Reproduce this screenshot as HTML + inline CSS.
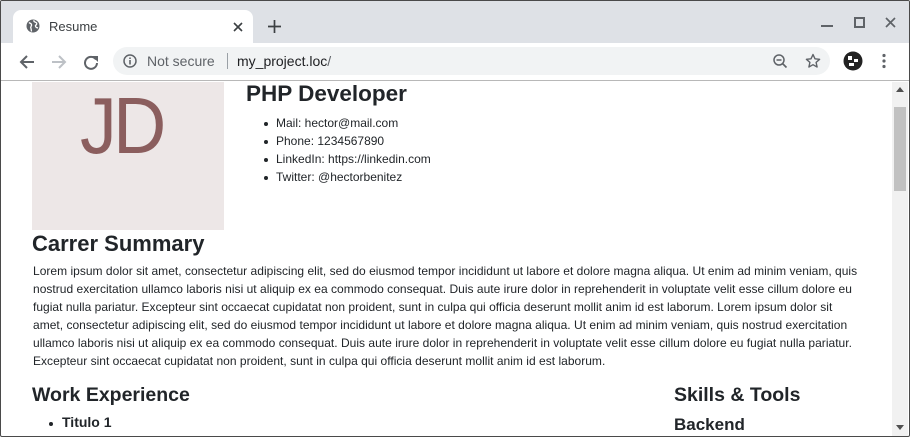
<!DOCTYPE html>
<html><head><meta charset="utf-8"><style>
*{margin:0;padding:0;box-sizing:border-box}
body{width:910px;height:437px;overflow:hidden;font-family:"Liberation Sans",sans-serif;background:#fff;position:relative;color:#212529}
.win{position:absolute;left:0;top:0;width:910px;height:437px;border:1px solid #4a4a4a;border-radius:2px;overflow:hidden}
.title{position:absolute;left:0;top:0;width:908px;height:42px;background:#dee1e6}
.tab{position:absolute;left:12px;top:9px;width:240px;height:34px;background:#fff;border-radius:8px 8px 0 0}
.tab .t{position:absolute;left:36px;top:9px;font-size:13px;color:#3c4043}
.tool{position:absolute;left:0;top:42px;width:908px;height:38px;background:#fff;border-bottom:1px solid #b8b8b8}
.omni{position:absolute;left:112px;top:4px;width:717px;height:28px;background:#f1f3f4;border-radius:14px}
.omni .ns{position:absolute;left:34px;top:6px;font-size:14px;color:#5f6368}
.omni .sep{position:absolute;left:114px;top:6px;width:1px;height:16px;background:#9aa0a6}
.omni .url{position:absolute;left:124px;top:6px;font-size:14px;color:#202124}
.content{position:absolute;left:0;top:81px;width:891px;height:354px;overflow:hidden}
.sb{position:absolute;left:891px;top:81px;width:16px;height:354px;background:#f1f1f1}
.thumb{position:absolute;left:2px;top:25px;width:12px;height:84px;background:#c1c1c1}
.photo{position:absolute;left:31px;top:0;width:192px;height:148px;background:#ede7e7}
.photo span{position:absolute;left:48px;top:-2px;font-size:80px;color:#8b5e5e;letter-spacing:-4px;transform:scaleX(0.92);transform-origin:left}
h1{position:absolute;font-size:23px;font-weight:bold;color:#212529;white-space:nowrap}
ul.info{position:absolute;left:263px;top:32px;font-size:12px;list-style:none}
ul.info li{height:18px;line-height:18px;position:relative;padding-left:12px}
ul.info li:before{content:"";position:absolute;left:0;top:8px;width:4px;height:4px;border-radius:50%;background:#212529}
p{position:absolute;left:32px;top:180px;font-size:12px;line-height:18px;white-space:nowrap;letter-spacing:0.02px}
</style></head><body><div class="win">
<div class="title">
<div class="tab">
<svg style="position:absolute;left:13px;top:9px" width="14" height="14" viewBox="0 0 14 14"><circle cx="7" cy="7" r="6.5" fill="#5f6368"/><path d="M3 3.5c1 1 2 .5 2.5 2S4 7.5 5 9.5l.5 3M8 1.2c-.5 1.5 1 2 2 2.3 1 .3 1 2 0 2.5-1 .5-.5 2 .5 2.5L12 9" stroke="#fff" stroke-width="1.3" fill="none"/></svg>
<span class="t">Resume</span>
<svg style="position:absolute;left:220px;top:12px" width="10" height="10"><path d="M1 1L9 9M9 1L1 9" stroke="#3c4043" stroke-width="1.6"/></svg>
</div>
<svg style="position:absolute;left:267px;top:19px" width="13" height="13"><path d="M6.5 0v13M0 6.5h13" stroke="#3c4043" stroke-width="1.7"/></svg>
<svg style="position:absolute;left:820px;top:24px" width="12" height="3"><rect width="12" height="2" fill="#5f6368"/></svg>
<svg style="position:absolute;left:853px;top:16px" width="11" height="11"><rect x="1" y="1" width="9" height="9" fill="none" stroke="#5f6368" stroke-width="2"/></svg>
<svg style="position:absolute;left:884px;top:16px" width="11" height="11"><path d="M1 1L10 10M10 1L1 10" stroke="#5f6368" stroke-width="1.7"/></svg>
</div>
<div class="tool">
<svg style="position:absolute;left:18px;top:11px" width="16" height="16"><path d="M15 8H2M8 2L2 8l6 6" stroke="#5f6368" stroke-width="2" fill="none"/></svg>
<svg style="position:absolute;left:50px;top:11px" width="16" height="16"><path d="M1 8h13M8 2l6 6-6 6" stroke="#bdc1c6" stroke-width="2" fill="none"/></svg>
<svg style="position:absolute;left:82px;top:11px" width="16" height="16"><path d="M13 5.5A6 6 0 1 0 14 9" stroke="#5f6368" stroke-width="2" fill="none"/><path d="M9 2h6v6z" fill="#5f6368"/></svg>
<div class="omni">
<svg style="position:absolute;left:10px;top:7px" width="14" height="14"><circle cx="7" cy="7" r="6" stroke="#5f6368" stroke-width="1.5" fill="none"/><path d="M7 6v4.5M7 3.5v1.5" stroke="#5f6368" stroke-width="1.6"/></svg>
<span class="ns">Not secure</span><span class="sep"></span><span class="url">my_project.loc<span style="color:#5f6368">/</span></span>
<svg style="position:absolute;left:660px;top:7px" width="15" height="15"><circle cx="6" cy="6" r="5" stroke="#5f6368" stroke-width="1.5" fill="none"/><path d="M3.5 6h5M9.5 9.5l4 4" stroke="#5f6368" stroke-width="1.6"/></svg>
<svg style="position:absolute;left:692px;top:6px" width="16" height="16" viewBox="0 0 16 16"><path d="M8 1.5l2 4.3 4.6.5-3.5 3.1 1 4.6L8 11.7 3.9 14l1-4.6L1.4 6.3 6 5.8z" stroke="#5f6368" stroke-width="1.4" fill="none" stroke-linejoin="round"/></svg>
</div>
<svg style="position:absolute;left:842px;top:8px" width="20" height="20"><circle cx="10" cy="10" r="9.5" fill="#222"/><path d="M5 5h4v4H5zM11 8h4v3h-4zM6 12h5v3H6z" fill="#fff"/></svg>
<svg style="position:absolute;left:881px;top:10px" width="4" height="16"><circle cx="2" cy="2.5" r="1.6" fill="#5f6368"/><circle cx="2" cy="8" r="1.6" fill="#5f6368"/><circle cx="2" cy="13.5" r="1.6" fill="#5f6368"/></svg>
</div>
<div class="content">
<div class="photo"><span>JD</span></div>
<h1 style="left:245px;top:-1px;font-size:22.5px">PHP Developer</h1>
<ul class="info"><li>Mail: hector@mail.com</li><li>Phone: 1234567890</li><li>LinkedIn: https://linkedin.com</li><li>Twitter: @hectorbenitez</li></ul>
<h1 style="left:31px;top:149px;font-size:22px">Carrer Summary</h1>
<p>Lorem ipsum dolor sit amet, consectetur adipiscing elit, sed do eiusmod tempor incididunt ut labore et dolore magna aliqua. Ut enim ad minim veniam, quis<br>nostrud exercitation ullamco laboris nisi ut aliquip ex ea commodo consequat. Duis aute irure dolor in reprehenderit in voluptate velit esse cillum dolore eu<br>fugiat nulla pariatur. Excepteur sint occaecat cupidatat non proident, sunt in culpa qui officia deserunt mollit anim id est laborum. Lorem ipsum dolor sit<br>amet, consectetur adipiscing elit, sed do eiusmod tempor incididunt ut labore et dolore magna aliqua. Ut enim ad minim veniam, quis nostrud exercitation<br>ullamco laboris nisi ut aliquip ex ea commodo consequat. Duis aute irure dolor in reprehenderit in voluptate velit esse cillum dolore eu fugiat nulla pariatur.<br>Excepteur sint occaecat cupidatat non proident, sunt in culpa qui officia deserunt mollit anim id est laborum.</p>
<h1 style="left:31px;top:302px;font-size:19.5px;font-weight:600">Work Experience</h1>
<div style="position:absolute;left:48px;top:340px;width:4px;height:4px;border-radius:50%;background:#212529"></div>
<h1 style="left:61px;top:332px;font-size:14px">Titulo 1</h1>
<h1 style="left:673px;top:302px;font-size:19.5px;font-weight:600">Skills &amp; Tools</h1>
<h1 style="left:673px;top:333px;font-size:17px">Backend</h1>
</div>
<div class="sb"><svg style="position:absolute;left:4px;top:5px" width="8" height="5"><path d="M0 5L4 0 8 5z" fill="#505050"/></svg><div class="thumb"></div><svg style="position:absolute;left:4px;top:343px" width="8" height="5"><path d="M0 0L4 5 8 0z" fill="#505050"/></svg></div>
</div></body></html>
